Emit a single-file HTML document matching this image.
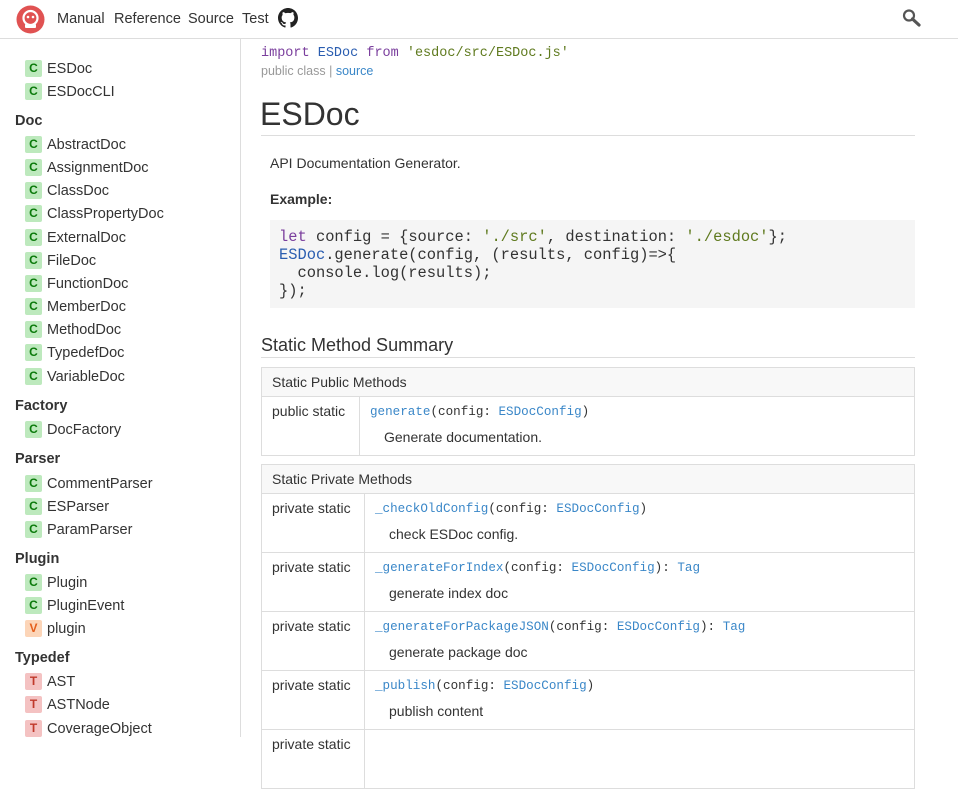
<!DOCTYPE html>
<html><head><meta charset="utf-8"><style>
*{margin:0;padding:0;box-sizing:border-box}
body{width:958px;height:737px;overflow:hidden;background:#fff;font-family:"Liberation Sans",sans-serif;color:#333;position:relative}
.hdr{position:absolute;left:0;top:0;width:958px;height:39px;background:#fff;border-bottom:1px solid #ddd}
.hdr .nav{position:absolute;top:11px;font-size:14.5px;color:#333}
.side{position:absolute;left:0;top:39px;width:241px;height:698px;border-right:1px solid #ddd}
.it{position:absolute;left:25px;font-size:14.5px;color:#333;height:18px;line-height:18px;margin-top:2px}
.b{display:inline-block;width:17px;height:17px;line-height:17px;text-align:center;font-weight:bold;font-size:12px;border-radius:2px;margin-right:5px;vertical-align:top}
.c{background:#bde9bd;color:#0b7a0b}
.v{background:#fcd5b8;color:#e45d1a}
.t{background:#f4c2c2;color:#c0392b}
.sh{position:absolute;left:15px;font-size:14.5px;font-weight:bold;color:#333;margin-top:2px}
.a{position:absolute}
.mono{font-family:"Liberation Mono",monospace}
.lnk{color:#3a87c8}
table{position:absolute;left:261px;width:654px;border-collapse:collapse;font-size:14px}
td{border:1px solid #ddd;vertical-align:top}
.th{background:#f8f8f8;height:28px;padding:6px 10px;font-size:14px}
</style></head><body>
<div class="hdr">
<svg class="a" style="left:16px;top:5px" width="29" height="29" viewBox="0 0 29 29"><circle cx="14.5" cy="14.5" r="14" fill="#e05252"/><circle cx="14.5" cy="13" r="7" fill="none" stroke="#fff" stroke-width="2.2"/><rect x="9" y="19" width="11" height="4" rx="1" fill="#fff"/><circle cx="12" cy="12" r="1.3" fill="#fff"/><circle cx="17" cy="12" r="1.3" fill="#fff"/></svg>
<span class="nav" style="left:57px">Manual</span>
<span class="nav" style="left:114px">Reference</span>
<span class="nav" style="left:188px">Source</span>
<span class="nav" style="left:242px">Test</span>
<svg class="a" style="left:278px;top:8px" width="20" height="20" viewBox="0 0 16 16"><path fill="#222" d="M8 0C3.58 0 0 3.58 0 8c0 3.540 2.29 6.53 5.470 7.59.4.07.55-.17.55-.38v-1.34c-2.230.48-2.700-1.070-2.700-1.070-.36-.92-.89-1.170-.89-1.170-.73-.5.06-.49.06-.49.8.06 1.230.83 1.230.83.72 1.220 1.870.87 2.330.67.07-.52.28-.87.51-1.070-1.780-.2-3.640-.89-3.640-3.950 0-.87.31-1.590.82-2.150-.08-.2-.36-1.020.08-2.120 0 0 .67-.21 2.200.82A7.6 7.6 0 0 1 8 3.87c.68 0 1.360.09 2 .27 1.530-1.040 2.200-.82 2.200-.82.44 1.100.16 1.920.08 2.120.51.56.82 1.270.82 2.150 0 3.070-1.870 3.750-3.650 3.950.29.25.54.73.54 1.480v2.200c0 .21.15.46.55.38A8 8 0 0 0 16 8c0-4.420-3.580-8-8-8z"/></svg>
<svg class="a" style="left:901px;top:8px" width="22" height="20" viewBox="0 0 22 20"><circle cx="8" cy="7.5" r="5" fill="none" stroke="#555" stroke-width="2.2"/><line x1="11.5" y1="11" x2="18" y2="17" stroke="#555" stroke-width="3.2" stroke-linecap="round"/></svg>
</div>
<div class="side"></div>
<div class="it" style="top:58px"><span class="b c">C</span>ESDoc</div>
<div class="it" style="top:81px"><span class="b c">C</span>ESDocCLI</div>
<div class="sh" style="top:111px">Doc</div>
<div class="it" style="top:134px"><span class="b c">C</span>AbstractDoc</div>
<div class="it" style="top:157px"><span class="b c">C</span>AssignmentDoc</div>
<div class="it" style="top:180px"><span class="b c">C</span>ClassDoc</div>
<div class="it" style="top:203px"><span class="b c">C</span>ClassPropertyDoc</div>
<div class="it" style="top:227px"><span class="b c">C</span>ExternalDoc</div>
<div class="it" style="top:250px"><span class="b c">C</span>FileDoc</div>
<div class="it" style="top:273px"><span class="b c">C</span>FunctionDoc</div>
<div class="it" style="top:296px"><span class="b c">C</span>MemberDoc</div>
<div class="it" style="top:319px"><span class="b c">C</span>MethodDoc</div>
<div class="it" style="top:342px"><span class="b c">C</span>TypedefDoc</div>
<div class="it" style="top:366px"><span class="b c">C</span>VariableDoc</div>
<div class="sh" style="top:396px">Factory</div>
<div class="it" style="top:419px"><span class="b c">C</span>DocFactory</div>
<div class="sh" style="top:449px">Parser</div>
<div class="it" style="top:473px"><span class="b c">C</span>CommentParser</div>
<div class="it" style="top:496px"><span class="b c">C</span>ESParser</div>
<div class="it" style="top:519px"><span class="b c">C</span>ParamParser</div>
<div class="sh" style="top:549px">Plugin</div>
<div class="it" style="top:572px"><span class="b c">C</span>Plugin</div>
<div class="it" style="top:595px"><span class="b c">C</span>PluginEvent</div>
<div class="it" style="top:618px"><span class="b v">V</span>plugin</div>
<div class="sh" style="top:648px">Typedef</div>
<div class="it" style="top:671px"><span class="b t">T</span>AST</div>
<div class="it" style="top:694px"><span class="b t">T</span>ASTNode</div>
<div class="it" style="top:718px"><span class="b t">T</span>CoverageObject</div>

<div class="a mono" style="left:261px;top:46px;font-size:13.5px;color:#333"><span style="color:#7a3e9d">import</span> <span style="color:#2a5db0">ESDoc</span> <span style="color:#7a3e9d">from</span> <span style="color:#5f7a1e">'esdoc/src/ESDoc.js'</span></div>
<div class="a" style="left:261px;top:64px;font-size:12.5px;color:#999">public class | <span class="lnk">source</span></div>
<div class="a" style="left:260px;top:96px;font-size:32px;color:#333">ESDoc</div>
<div class="a" style="left:261px;top:135px;width:654px;border-top:1px solid #ddd"></div>
<div class="a" style="left:270px;top:155px;font-size:14px">API Documentation Generator.</div>
<div class="a" style="left:270px;top:191px;font-size:14px;font-weight:bold">Example:</div>
<div class="a mono" style="left:270px;top:220px;width:645px;height:88px;background:#f5f5f5;padding:8px 9px;font-size:15.4px;line-height:18px;white-space:pre;color:#333"><span style="color:#7a3e9d">let</span> config = {source: <span style="color:#5f7a1e">'./src'</span>, destination: <span style="color:#5f7a1e">'./esdoc'</span>};
<span style="color:#2a5db0">ESDoc</span>.generate(config, (results, config)=>{
  console.log(results);
});</div>
<div class="a" style="left:261px;top:335px;font-size:18px">Static Method Summary</div>
<div class="a" style="left:261px;top:357px;width:654px;border-top:1px solid #ddd"></div>

<table style="top:367px">
<tr><td colspan="2" class="th">Static Public Methods</td></tr>
<tr style="height:59px"><td style="width:98px;padding:6px 10px">public static</td><td style="padding:8px 10px"><div class="mono" style="font-size:12.6px"><span class="lnk">generate</span>(config: <span class="lnk">ESDocConfig</span>)</div><div style="padding:10px 0 0 14px">Generate documentation.</div></td></tr>
</table>
<table style="top:464px">
<tr><td colspan="2" class="th">Static Private Methods</td></tr>
<tr style="height:59px"><td style="width:103px;padding:6px 10px">private static</td><td style="padding:8px 10px"><div class="mono" style="font-size:12.6px"><span class="lnk">_checkOldConfig</span>(config: <span class="lnk">ESDocConfig</span>)</div><div style="padding:10px 0 0 14px">check ESDoc config.</div></td></tr>
<tr style="height:59px"><td style="padding:6px 10px">private static</td><td style="padding:8px 10px"><div class="mono" style="font-size:12.6px"><span class="lnk">_generateForIndex</span>(config: <span class="lnk">ESDocConfig</span>): <span class="lnk">Tag</span></div><div style="padding:10px 0 0 14px">generate index doc</div></td></tr>
<tr style="height:59px"><td style="padding:6px 10px">private static</td><td style="padding:8px 10px"><div class="mono" style="font-size:12.6px"><span class="lnk">_generateForPackageJSON</span>(config: <span class="lnk">ESDocConfig</span>): <span class="lnk">Tag</span></div><div style="padding:10px 0 0 14px">generate package doc</div></td></tr>
<tr style="height:59px"><td style="padding:6px 10px">private static</td><td style="padding:8px 10px"><div class="mono" style="font-size:12.6px"><span class="lnk">_publish</span>(config: <span class="lnk">ESDocConfig</span>)</div><div style="padding:10px 0 0 14px">publish content</div></td></tr>
<tr style="height:59px"><td style="padding:6px 10px">private static</td><td></td></tr>
</table>
</body></html>
